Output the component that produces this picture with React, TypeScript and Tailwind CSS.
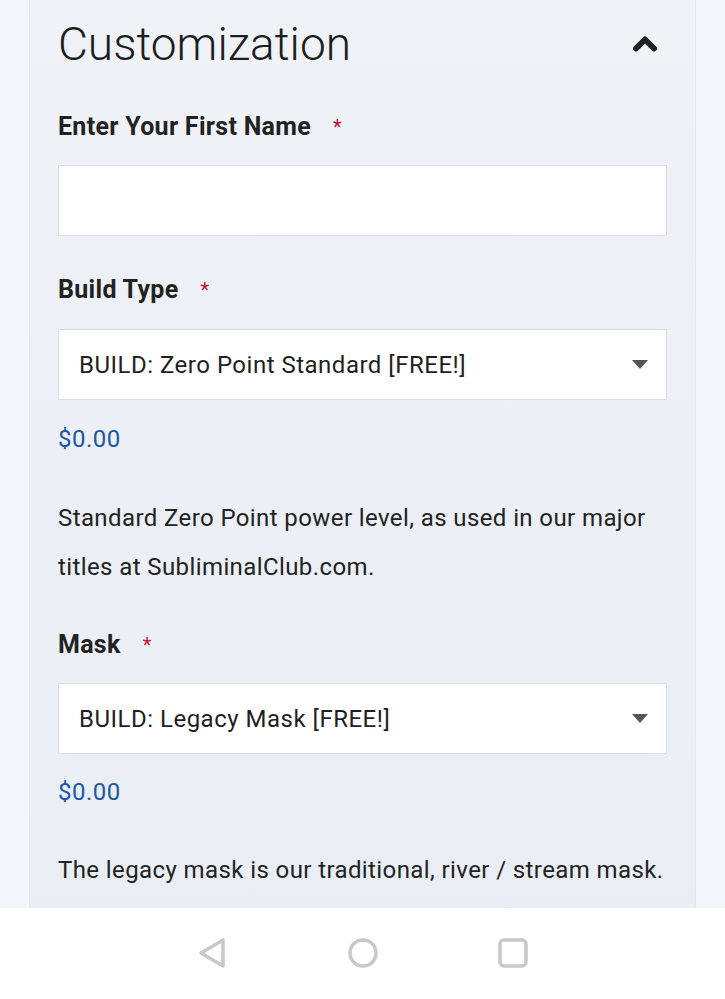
import { ChevronUp } from 'lucide-react';

const font = { fontFamily: 'Roboto, "Noto Sans", sans-serif' };

function Label({ children }: { children: string }) {
  return (
    <div className="flex items-start text-[25px] font-bold leading-[30px] tracking-[0.3px] text-[#222]">
      <span>{children}</span>
      <span className="ml-[22px] text-[20px] font-normal text-[#c8102e]">*</span>
    </div>
  );
}

function Select({ value }: { value: string }) {
  return (
    <div className="flex h-[71px] items-center justify-between border border-[#dcdfe4] bg-white pl-[20px] pr-[18px] text-[24px] tracking-[0.5px] text-[#1f1f1f]">
      <span>{value}</span>
      <svg width="16" height="10" viewBox="0 0 16 10">
        <path d="M0 0h16L8 9z" fill="#555" />
      </svg>
    </div>
  );
}

export default function App() {
  return (
    <div
      style={font}
      className="flex h-[999px] w-[725px] flex-col overflow-hidden bg-[#f2f5f9]">
      <div className="flex-1 overflow-hidden px-[29px]">
        <div className="h-full border-x border-[#e3e7ee] bg-gradient-to-b from-[#eff2f7] to-[#e9eef5] px-[28px]">
          <div className="flex h-[88px] items-center justify-between">
            <h1 className="text-[46px] font-light leading-[52px] text-[#1d1d1d]">Customization</h1>
            <ChevronUp size={36} strokeWidth={4} className="mr-[4px] text-[#222]" />
          </div>

          <div className="mt-[24px]">
            <Label>Enter Your First Name</Label>
          </div>
          <div className="mt-[23px] h-[71px] border border-[#dcdfe4] bg-white" />

          <div className="mt-[39px]">
            <Label>Build Type</Label>
          </div>
          <div className="mt-[24px]">
            <Select value="BUILD: Zero Point Standard [FREE!]" />
          </div>
          <div className="mt-[24px] text-[24px] leading-[30px] tracking-[0.5px] text-[#2156a5]">$0.00</div>
          <p className="mt-[40px] text-[24px] leading-[49px] tracking-[0.4px] text-[#222]">
            Standard Zero Point power level, as used in our major titles at SubliminalClub.com.
          </p>

          <div className="mt-[38px]">
            <Label>Mask</Label>
          </div>
          <div className="mt-[23px]">
            <Select value="BUILD: Legacy Mask [FREE!]" />
          </div>
          <div className="mt-[23px] text-[24px] leading-[30px] tracking-[0.5px] text-[#2156a5]">$0.00</div>
          <p className="mt-[39px] whitespace-nowrap text-[24px] leading-[49px] tracking-[0.4px] text-[#222]">
            The legacy mask is our traditional, river / stream mask.
          </p>
        </div>
      </div>

      <nav className="flex h-[91px] shrink-0 items-center justify-center gap-[118px] bg-white pb-[2px]">
        <svg width="32" height="32" viewBox="0 0 32 32">
          <path d="M26 3v26L4 16z" fill="none" stroke="#c8c8c8" strokeWidth="3.5" strokeLinejoin="round" />
        </svg>
        <svg width="32" height="32" viewBox="0 0 32 32">
          <circle cx="16" cy="16" r="13" fill="none" stroke="#c8c8c8" strokeWidth="3.5" />
        </svg>
        <svg width="32" height="32" viewBox="0 0 32 32">
          <rect x="3" y="3" width="26" height="26" rx="4" fill="none" stroke="#c8c8c8" strokeWidth="3.5" />
        </svg>
      </nav>
    </div>
  );
}
